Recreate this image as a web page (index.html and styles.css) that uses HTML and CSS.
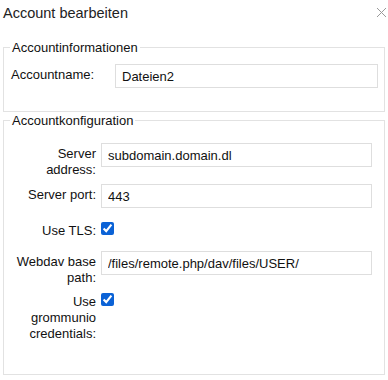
FILE: index.html
```html
<!DOCTYPE html>
<html lang="de">
    <head>
        <meta charset="utf-8">
        <title>Account bearbeiten</title>
        <link rel="stylesheet" href="styles.css">
    </head>
    <body>
        <div class="dialog">
            <header class="dialog-header">
                <div class="dialog-title">Account bearbeiten</div>
                <button class="close" type="button" aria-label="Schließen">
                    <svg width="11" height="11" viewBox="0 0 11 11">
                        <path d="M1 1 L10 10 M10 1 L1 10" stroke="#9a9a9a" stroke-width="1" fill="none"/>
                    </svg>
                </button>
            </header>
            <form class="dialog-body">
                <fieldset class="group group-info">
                    <legend>Accountinformationen</legend>
                    <div class="row">
                        <label class="label label-left" for="acc-name">Accountname:</label>
                        <input class="field" id="acc-name" type="text" value="Dateien2">
                    </div>
                </fieldset>
                <fieldset class="group group-config">
                    <legend>Accountkonfiguration</legend>
                    <div class="row">
                        <label class="label" for="srv-addr">Server address:</label>
                        <input class="field" id="srv-addr" type="text" value="subdomain.domain.dl">
                    </div>
                    <div class="row row-spaced">
                        <label class="label" for="srv-port">Server port:</label>
                        <input class="field" id="srv-port" type="text" value="443">
                    </div>
                    <div class="row row-check row-spaced">
                        <label class="label" for="use-tls">Use TLS:</label>
                        <input class="check" id="use-tls" type="checkbox" checked>
                    </div>
                    <div class="row row-tight">
                        <label class="label" for="dav-path">Webdav base path:</label>
                        <input class="field" id="dav-path" type="text" value="/files/remote.php/dav/files/USER/">
                    </div>
                    <div class="row row-check">
                        <label class="label" for="use-creds">Use grommunio credentials:</label>
                        <input class="check" id="use-creds" type="checkbox" checked>
                    </div>
                </fieldset>
            </form>
        </div>
    </body>
</html>
```

FILE: styles.css
```css
* {
    box-sizing: border-box;
}

html, body {
    margin: 0;
    padding: 0;
    background-color: #ffffff;
}

body {
    font-family: "Liberation Sans", Arial, sans-serif;
    font-size: 13px;
    color: #111111;
}

.dialog {
    width: 388px;
    height: 380px;
}

.dialog-header {
    display: flex;
    justify-content: space-between;
    align-items: flex-start;
    height: 40px;
    padding: 4px 1px 0 3px;
}

.dialog-title {
    font-size: 14.5px;
    line-height: 18px;
    color: #222222;
}

.close {
    border: 0;
    background: none;
    padding: 0;
    margin-top: 3px;
    width: 11px;
    height: 11px;
    display: block;
}
.close svg {
    display: block;
}

.dialog-body {
    margin: 0 3px;
}

.group {
    margin: 0;
    border: 1px solid #e2e2e2;
    padding: 0 6px;
}

.group legend {
    padding: 0 2px;
    line-height: 15px;
    color: #111111;
}

.group-info {
    padding-top: 9px;
    padding-bottom: 23px;
}

.group-config {
    margin-top: 1px;
    padding-top: 15px;
    padding-right: 12px;
    padding-bottom: 32px;
}

.row {
    display: flex;
    align-items: flex-start;
    margin-bottom: 6px;
}
.row:last-child {
    margin-bottom: 0;
}
.row-spaced {
    margin-bottom: 12px;
}
.row-tight {
    margin-bottom: 5px;
}

.label {
    flex: none;
    width: 86px;
    margin-right: 5px;
    padding-top: 3px;
    line-height: 16px;
    text-align: right;
}

.label-left {
    width: 104px;
    margin-left: 1px;
    margin-right: 0;
    text-align: left;
}

.field {
    flex: 1;
    min-width: 0;
    height: 24px;
    margin: 0;
    padding: 0 6px;
    border: 1px solid #dedede;
    border-radius: 0;
    font-family: "Liberation Sans", Arial, sans-serif;
    font-size: 13px;
    color: #111111;
    background-color: #ffffff;
    outline: none;
}

.row-check .check {
    width: 13px;
    height: 13px;
    margin: 2px 0 0 0;
    accent-color: #0b62d6;
}
```
